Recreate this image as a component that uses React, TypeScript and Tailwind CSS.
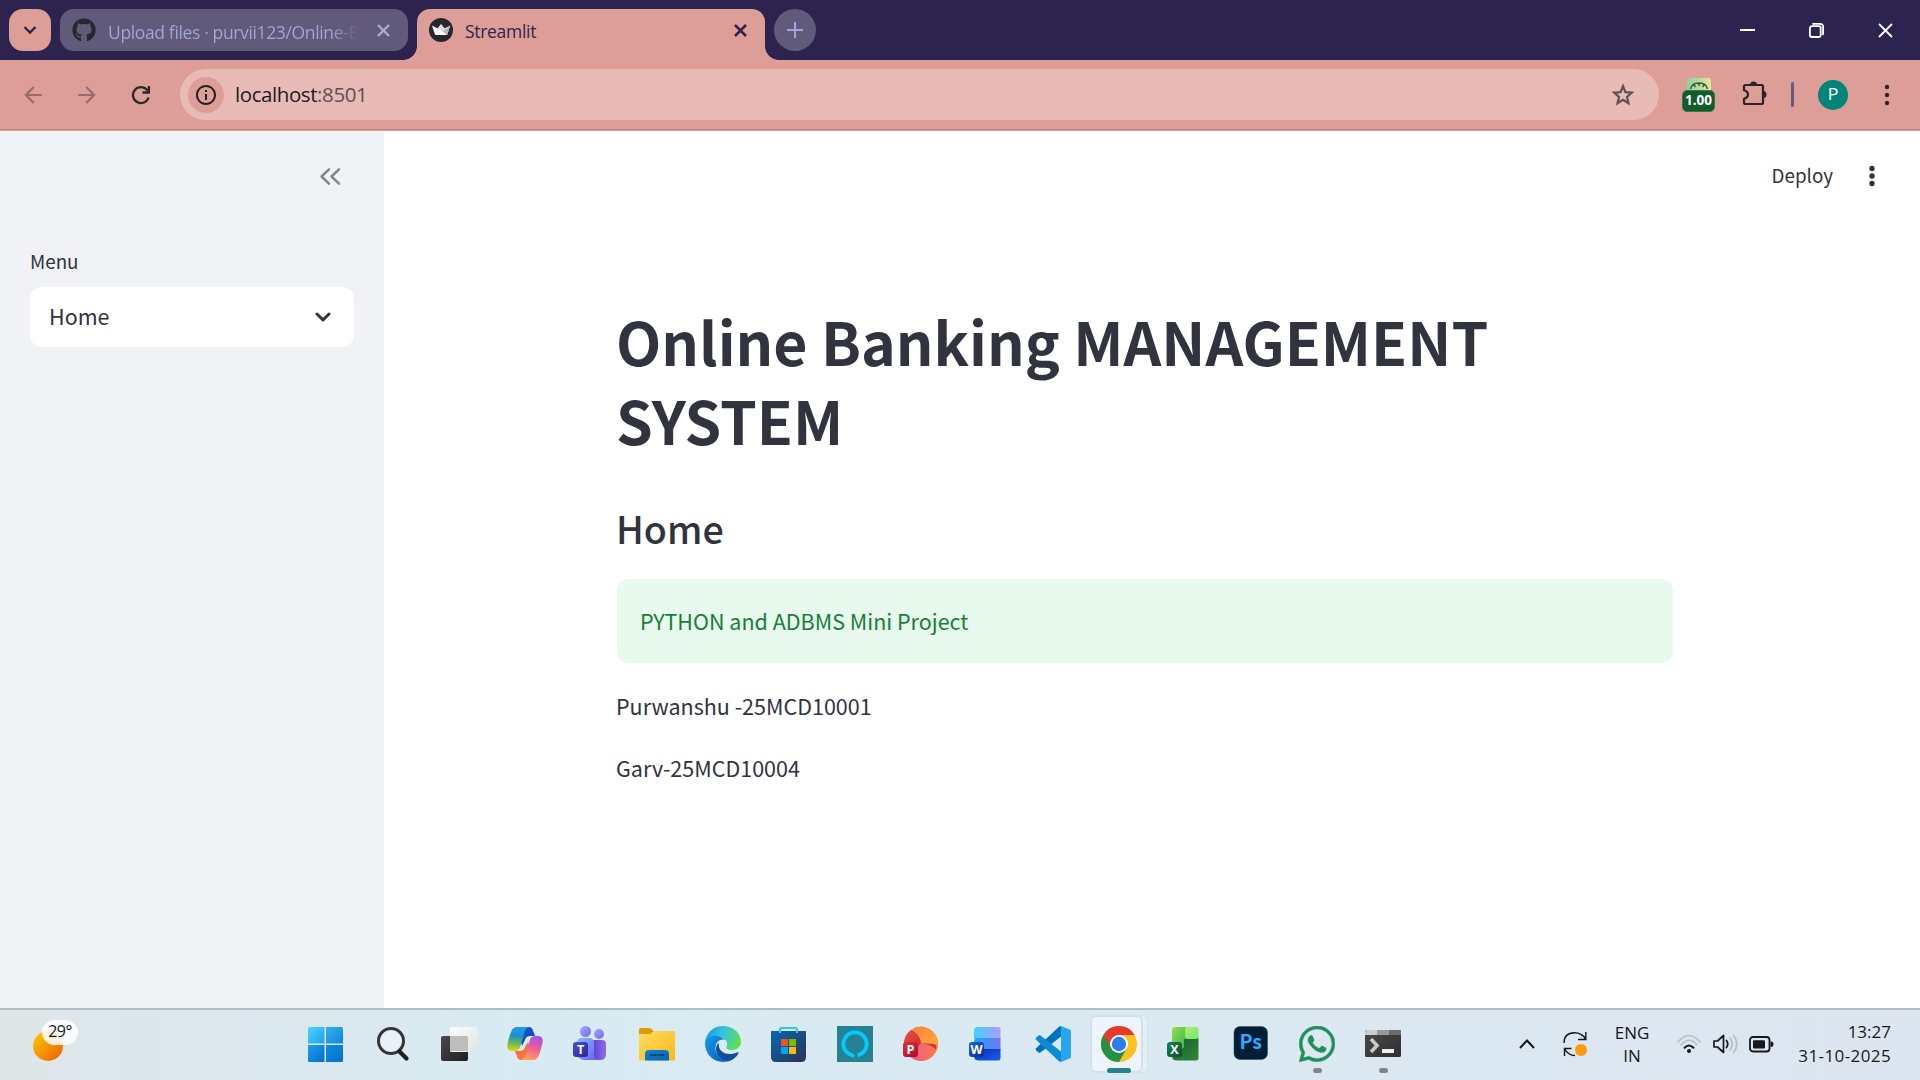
import React from 'react';
import { FaGithub } from 'react-icons/fa';
import { MdArrowBack, MdArrowForward, MdInfoOutline } from 'react-icons/md';

function Dots({ className, r = 2.2, gap = 8 }: { className: string; r?: number; gap?: number }) {
  return (
    <svg width="8" height="24" viewBox="0 0 8 24" className={className} fill="currentColor">
      <circle cx="4" cy={12 - gap} r={r} />
      <circle cx="4" cy="12" r={r} />
      <circle cx="4" cy={12 + gap} r={r} />
    </svg>
  );
}

function Cross({ size, width, className }: { size: number; width: number; className: string }) {
  return (
    <svg width={size} height={size} viewBox={`0 0 ${size} ${size}`} className={className} fill="none" stroke="currentColor" strokeWidth={width}>
      <path d={`M1 1L${size - 1} ${size - 1}M${size - 1} 1L1 ${size - 1}`} />
    </svg>
  );
}

function StreamlitCrown() {
  return (
    <svg width="24" height="24" viewBox="0 0 24 24">
      <circle cx="12" cy="12" r="12" fill="#262730" />
      <path d="M3 7.6 8.6 10.6 12 6.2 15.6 10.6 21.2 7.6 18.4 16.2Q18.2 17 17.4 17H7Q6.2 17 5.9 16.2Z" fill="#fff" />
      <path d="M12 6.2 15.6 10.6 17.8 17 8.6 10.6Z" fill="#e2e2e5" />
      <path d="M21.2 7.6 18.4 16.2 17.8 17 14 13Z" fill="#b4b4b8" />
    </svg>
  );
}

function TabStrip() {
  return (
    <header className="flex h-[60px] shrink-0 items-start bg-[#2c244e] pl-[9px] font-['Open_Sans',sans-serif]">
      <button className="mt-[9px] flex h-[42px] w-[42px] items-center justify-center rounded-[14px] bg-[#dd9e98] text-[#2c244e]">
        <svg width="14" height="10" viewBox="0 0 14 10" fill="none" stroke="currentColor" strokeWidth="2.3">
          <path d="M1.5 2 7 7.5 12.5 2" />
        </svg>
      </button>
      <div className="ml-[9px] mt-[9px] flex h-[42px] w-[348px] items-center rounded-[14px] bg-[#615a7a] pl-[12px] pr-[18px]">
        <FaGithub className="h-6 w-6 shrink-0 text-[#24292f]" />
        <div className="ml-[12px] mt-[4px] w-[253px] whitespace-nowrap bg-linear-to-r from-[#a3a6d8] from-88% to-transparent to-99% bg-clip-text text-[17.5px] leading-[32px] tracking-[-0.36px] text-transparent">
          Upload files · purvii123/Online-B
        </div>
        <Cross size={13} width={2.4} className="ml-auto text-[#a9adde]" />
      </div>
      <div className="ml-[-5px] flex h-[60px] w-[376px] items-end">
        <div className="h-[14px] w-[14px] shrink-0 bg-[radial-gradient(circle_at_0_0,transparent_13.5px,#dd9e98_14.3px)]" />
        <div className="flex h-[51px] w-[348px] shrink-0 items-start rounded-t-[13px] bg-[#dd9e98] pl-[12px] pr-[18px] pt-[9px]">
          <StreamlitCrown />
          <span className="ml-[12px] text-[17.5px] leading-[26px] tracking-[-0.3px] text-[#2c244e]">Streamlit</span>
          <Cross size={13} width={2.5} className="ml-auto mt-[6px] text-[#2c244e]" />
        </div>
        <div className="h-[14px] w-[14px] shrink-0 bg-[radial-gradient(circle_at_100%_0,transparent_13.5px,#dd9e98_14.3px)]" />
      </div>
      <button className="ml-[-5px] mt-[9px] flex h-[42px] w-[42px] items-center justify-center rounded-full bg-[#615a7a] text-[#a3a6dd]">
        <svg width="16" height="16" viewBox="0 0 16 16" fill="none" stroke="currentColor" strokeWidth="2">
          <path d="M8 0V16M0 8H16" />
        </svg>
      </button>
      <div className="ml-auto mr-[27px] flex h-[60px] items-center gap-[54px] text-white">
        <svg width="15" height="15" viewBox="0 0 15 15" fill="currentColor"><rect y="6" width="15" height="2" /></svg>
        <svg width="15" height="15" viewBox="0 0 15 15" fill="none" stroke="currentColor" strokeWidth="1.8">
          <rect x=".9" y="3.2" width="10.8" height="10.8" rx="2" />
          <path d="M3.4 1.1Q3.8.9 5 .9H11Q14.1.9 14.1 4V10Q14.1 11 13.7 12" />
        </svg>
        <Cross size={15} width={1.8} className="text-white" />
      </div>
    </header>
  );
}

function Toolbar() {
  return (
    <div className="flex h-[71px] shrink-0 flex-col bg-[#dd9e98] font-['Open_Sans',sans-serif]">
      <div className="flex h-[70px] items-center border-b border-[#b98480] pl-[21px]">
        <MdArrowBack className="h-[26px] w-[26px] -translate-x-px text-[#966c6b]" />
        <MdArrowForward className="ml-[28px] h-[26px] w-[26px] -translate-x-px text-[#966c6b]" />
        <svg width="20" height="20" viewBox="0 0 20 20" className="ml-[30px] text-[#27292b]" fill="none" stroke="currentColor" strokeWidth="2.3">
          <path d="M17.6 12.5A8 8 0 1 1 16.2 5L17.8 7" />
          <path d="M17.9 1V7.5H11.5" />
        </svg>
        <div className="ml-[29px] flex h-[51px] w-[1479px] items-center rounded-full bg-[#e8bbb7] pl-[8px] pr-[24px]">
          <div className="flex h-[36px] w-[36px] items-center justify-center rounded-full bg-[#dd9e98]">
            <MdInfoOutline className="h-[24px] w-[24px] text-[#202124]" />
          </div>
          <span className="ml-[11px] text-[20.5px] tracking-[-0.42px] text-[#5f4f52]"><span className="text-[#1d1c20]">localhost</span>:8501</span>
          <svg width="24" height="24" viewBox="0 0 24 24" className="ml-auto" fill="none" stroke="#5c5053" strokeWidth="2.2">
            <path d="M12 3.2 14.4 9.100 20.800 9.700 16 13.900 17.400 20.100 12 16.800 6.600 20.100 8 13.900 3.200 9.700 9.600 9.100Z" />
          </svg>
        </div>
        <div className="ml-[23px] flex w-[33px] flex-col items-center">
          <svg width="24" height="12" viewBox="0 0 24 12">
            <defs><linearGradient id="speed" x1="0" x2="1"><stop stopColor="#8fd09a" /><stop offset="1" stopColor="#e9e59a" /></linearGradient></defs>
            <path d="M0 12V3Q0 0 3 0H21Q24 0 24 3V12Z" fill="url(#speed)" />
            <path d="M3.5 11Q5 5 12 5T20.5 11M12 5V8M7 7 8.5 9M17 7 15.5 9" fill="none" stroke="#2f5446" strokeWidth="1.3" />
          </svg>
          <span className="flex h-[22px] w-[33px] items-center justify-center rounded-[5px] border border-[#3c7747] bg-[#115c2a] text-[13.5px] font-bold leading-none text-white">1.00</span>
        </div>
        <svg width="27" height="27" viewBox="0 0 27 27" className="ml-[26px] -translate-y-px">
          <path d="M3 6.5Q3 5 4.5 5H20.5Q22 5 22 6.5V22.5Q22 24 20.5 24H4.5Q3 24 3 22.5V18.7Q7 17.5 7 14.5T3 10.3Z" fill="none" stroke="#2b2426" strokeWidth="2.2" strokeLinejoin="round" />
          <path d="M9 5A3.5 3.5 0 0 1 16 5ZM22 11A3.5 3.5 0 0 1 22 18Z" fill="#2b2426" />
        </svg>
        <div className="ml-[23px] h-[25px] w-[3px] rounded-full bg-[#675a7f]" />
        <div className="ml-[24px] flex h-[30px] w-[30px] items-center justify-center rounded-full bg-[#008577] font-['Roboto',sans-serif] text-[16px] text-white">P</div>
        <Dots className="ml-[35px] text-[#2b2426]" />
      </div>
    </div>
  );
}

function Sidebar() {
  return (
    <aside className="flex w-[384px] shrink-0 flex-col bg-[#f0f2f6] px-[30px]">
      <div className="flex h-[90px] items-center justify-end">
        <svg width="22" height="19" viewBox="0 0 22 19" className="mr-[13px] text-[#82848f]" fill="none" stroke="currentColor" strokeWidth="2.5" strokeLinecap="round" strokeLinejoin="round">
          <path d="M10 2.3 2.5 9.5 10 16.7M20 2.3 12.5 9.5 20 16.7" />
        </svg>
      </div>
      <label className="mt-[25px] text-[18.8px] leading-[30px]">Menu</label>
      <div className="mt-[11px] flex h-[60px] items-center rounded-[12px] bg-white pl-[19px] pr-[23px] text-[21.5px]">
        <span className="-mt-[2px]">Home</span>
        <svg width="16" height="11" viewBox="0 0 16 11" className="ml-auto" fill="none" stroke="currentColor" strokeWidth="3" strokeLinecap="round" strokeLinejoin="round">
          <path d="M2 2 8 7.8 14 2" />
        </svg>
      </div>
    </aside>
  );
}

function Main() {
  return (
    <main className="flex flex-1 flex-col bg-white">
      <div className="flex h-[90px] shrink-0 items-center justify-end pr-[44px]">
        <span className="-mt-[2px] text-[18.8px]">Deploy</span>
        <Dots className="ml-[35px]" r={2.7} gap={7.5} />
      </div>
      <div className="ml-[233px] w-[1056px] pt-[80px]">
        <h1 className="-ml-px text-[58.9px] font-bold leading-[79px]">Online Banking MANAGEMENT<br />SYSTEM</h1>
        <h3 className="-ml-px mt-[44px] text-[37.6px] font-medium leading-[50px]">Home</h3>
        <div className="mt-[26px] flex h-[84px] items-center rounded-[12px] bg-[#e8f9ee] px-[23px] text-[21.5px] text-[#177f38]">PYTHON and ADBMS Mini Project</div>
        <p className="-ml-px mt-[24px] text-[21.5px] leading-[38px]">Purwanshu -25MCD10001</p>
        <p className="-ml-px mt-[24px] text-[21.5px] leading-[38px]">Garv-25MCD10004</p>
      </div>
    </main>
  );
}

const icon = { width: 36, height: 36, viewBox: '0 0 36 36' };

function Gradient({ id, from, to, horizontal }: { id: string; from: string; to: string; horizontal?: boolean }) {
  return (
    <linearGradient id={id} x1="0" y1="0" x2="1" y2={horizontal ? '0' : '1'}>
      <stop stopColor={from} /><stop offset="1" stopColor={to} />
    </linearGradient>
  );
}

function Start() {
  return (
    <svg {...icon}>
      <defs>
        <Gradient id="w1" from="#4ed3ff" to="#1fa0ec" /><Gradient id="w2" from="#31b1ef" to="#0f86dd" />
        <Gradient id="w3" from="#1f9ee9" to="#0070d0" /><Gradient id="w4" from="#0f8ae0" to="#0072d2" />
      </defs>
      <path d="M0 2.5Q0 1 1.5 1H16.5V17.5H0Z" fill="url(#w1)" /><path d="M18 1H33.5Q35 1 35 2.5V17.5H18Z" fill="url(#w2)" />
      <path d="M0 19H16.5V36H1.5Q0 36 0 34.5Z" fill="url(#w3)" /><path d="M18 19H35V34.5Q35 36 33.5 36H18Z" fill="url(#w4)" />
    </svg>
  );
}

function SearchIcon() {
  return (
    <svg {...icon}>
      <circle cx="16" cy="15" r="12.5" fill="#e9f1f7" stroke="#363636" strokeWidth="3" />
      <path d="M24.5 25.5 31.5 32.5" stroke="#1f1f1f" strokeWidth="4.2" strokeLinecap="round" />
    </svg>
  );
}

function TaskView() {
  return (
    <svg {...icon}>
      <defs><Gradient id="tv1" from="#4b4b4b" to="#1e1e1e" /><Gradient id="tv2" from="#fdfdfd" to="#e2e3e5" /></defs>
      <rect y="10" width="27" height="25" rx="2" fill="url(#tv1)" />
      <rect x="9" y="1" width="27" height="25" rx="1.5" fill="url(#tv2)" />
      <path d="M9 10H25Q27 10 27 12V25H9Z" fill="#bdbdbd" />
    </svg>
  );
}

function Copilot() {
  return (
    <svg {...icon}>
      <defs>
        <linearGradient id="cp1" x1=".4" y1="0" x2=".3" y2="1"><stop stopColor="#1d9be8" /><stop offset=".35" stopColor="#1c8fd6" /><stop offset=".65" stopColor="#5cb85a" /><stop offset="1" stopColor="#f0cf12" /></linearGradient>
        <linearGradient id="cp2" x1=".7" y1="0" x2=".4" y2="1"><stop stopColor="#a450f0" /><stop offset=".5" stopColor="#ee5f92" /><stop offset="1" stopColor="#fda05c" /></linearGradient>
        <Gradient id="cp3" from="#1c5fdc" to="#0a3fae" /><Gradient id="cp4" from="#f4602c" to="#f7874a" />
      </defs>
      <path d="M10 1H22Q25 1 26 4.5L28 10H23Q19 10 18 14L15 20Z" fill="url(#cp3)" />
      <path d="M26 34H14Q11 34 10 30.5L8 25H13Q17 25 18 21L21 16Z" fill="url(#cp4)" />
      <path d="M10 1H22Q19 1.5 17.5 6L13.5 20Q12 25 7.5 25H4.5Q0 25 .3 19Q1.5 12 4.5 5Q6 1 10 1Z" fill="url(#cp1)" />
      <path d="M26 34H14Q17 33.5 18.5 29L22.5 15Q24 10 28.5 10H31.5Q36 10 35.7 16Q34.5 23 31.5 30Q30 34 26 34Z" fill="url(#cp2)" />
    </svg>
  );
}

function LetterBadge({ letter, fill }: { letter: string; fill: string }) {
  return (
    <>
      <rect y="16" width="15" height="15" rx="3" fill={fill} />
      <text x="7.5" y="27.8" textAnchor="middle" fontSize="12.5" fontWeight="700" fill="#fff" fontFamily="Open Sans, sans-serif">{letter}</text>
    </>
  );
}

function Teams() {
  return (
    <svg {...icon}>
      <defs><Gradient id="t1" from="#a7a6ff" to="#6f6be8" /><Gradient id="t2" from="#5341c8" to="#8f6cf2" horizontal /><Gradient id="t3" from="#82bdff" to="#6a5af0" /><Gradient id="t4" from="#4650d0" to="#2e22a0" /></defs>
      <circle cx="26" cy="8" r="5" fill="url(#t1)" />
      <path d="M18 14H29Q33 14 33 18V28Q33 34 27 34H18Z" fill="url(#t2)" />
      <circle cx="12.5" cy="5.5" r="5.5" fill="url(#t1)" />
      <path d="M4 17Q4 12 9 12H16Q21 12 21 17V29Q21 34 26 34H12Q4 34 4 26Z" fill="url(#t3)" />
      <LetterBadge letter="T" fill="url(#t4)" />
    </svg>
  );
}

function Folder() {
  return (
    <svg {...icon}>
      <defs><Gradient id="f1" from="#ffdb63" to="#fcb917" /><Gradient id="f2" from="#1182cf" to="#0b62ae" /></defs>
      <path d="M0 3.5Q0 2 1.5 2H10Q11.5 2 13 3.5L15 5.5V12H0Z" fill="#dd9a04" />
      <path d="M0 8H10Q11.5 8 13 6.5L14 5.5Q14.5 5 16 5H34.5Q36 5 36 6.5V33Q36 34.5 34.5 34.5H1.5Q0 34.5 0 33Z" fill="url(#f1)" />
      <path d="M6 34.5V28Q6 24 10 24H26Q30 24 30 28V34.5Z" fill="url(#f2)" />
      <rect x="10.5" y="28" width="15" height="2" rx="1" fill="#084b89" />
    </svg>
  );
}

function Edge() {
  return (
    <svg {...icon}>
      <defs>
        <linearGradient id="e1" x1="0" y1=".3" x2="1" y2=".6"><stop stopColor="#1b9de2" /><stop offset=".45" stopColor="#34c3e0" /><stop offset="1" stopColor="#63e04b" /></linearGradient>
        <Gradient id="e2" from="#1599e5" to="#0560c0" />
      </defs>
      <path d="M0 17C1 6 9 0 18 0C28 0 36 7 36 15.5C36 21 32 24 27 24C23 24 20.5 22.5 21.5 20.5C23 18.5 22.5 14 18.5 13.5C12 8 3 10 0 17Z" fill="url(#e1)" />
      <path d="M0 17C2 8.5 13 7.5 19 13.5C14 13 10 17 10.5 23C11 29 16 34.5 22 35.5C10 38 0 29 0 17Z" fill="url(#e2)" />
      <path d="M14 17C12.5 24 19 28.5 25.5 28C29 27.7 31.5 26.5 33 26.2Q34 26 33.5 27.2C31 32 26.5 35 22 35.5C15.5 34.5 11 29 11 23C11 20 12 18 14 17Z" fill="#104f9c" />
    </svg>
  );
}

function Store() {
  return (
    <svg {...icon}>
      <defs><Gradient id="s1" from="#0768b4" to="#2a3158" /></defs>
      <path d="M0 5H35V31Q35 36 30 36H5Q0 36 0 31Z" fill="url(#s1)" />
      <path d="M9 7V3.500Q9 2 10.5 2H24.5Q26 2 26 3.5V7" fill="none" stroke="#37c2f3" strokeWidth="2" />
      <path d="M10 13H17V20H10Z" fill="#f25022" /><path d="M18 13H25V20H18Z" fill="#7fba00" />
      <path d="M10 21H17V28H10Z" fill="#00a4ef" /><path d="M18 21H25V28H18Z" fill="#ffb900" />
    </svg>
  );
}

function Alexa() {
  return (
    <svg {...icon}>
      <rect width="36" height="36" fill="#268293" />
      <path d="M15.5 29.3A11.6 11.6 0 1 1 20.5 29.3" fill="none" stroke="#03caff" strokeWidth="3.8" />
      <path d="M14.5 27.5 17 28.2Q18 30 17.3 31.5Q15.8 31.2 14.5 30.8Z" fill="#03caff" />
    </svg>
  );
}

function PowerPoint() {
  return (
    <svg {...icon}>
      <defs><Gradient id="p1" from="#e8503e" to="#c22a33" /><Gradient id="p2" from="#f9813e" to="#ffa736" /><Gradient id="p3" from="#e64fa0" to="#ff7d45" horizontal /><Gradient id="p4" from="#e02c45" to="#a70e26" /></defs>
      <circle cx="18" cy="18" r="17" fill="url(#p3)" />
      <path d="M8 4A17 17 0 0 1 35 18Q34 19.5 31 18.5L18 17Q17 9 8 4Z" fill="url(#p2)" />
      <path d="M18 17 31 18Q34 18.5 33 23.5Q27 18 18 17Z" fill="#c83a37" />
      <path d="M1 18A17 17 0 0 1 8 4Q17 8 18 17Q14 21 13 27L6 30Q1 25 1 18Z" fill="url(#p1)" />
      <LetterBadge letter="P" fill="url(#p4)" />
    </svg>
  );
}

function Word() {
  return (
    <svg {...icon}>
      <defs><Gradient id="d1" from="#3fd0ff" to="#b29bf5" horizontal /><Gradient id="d2" from="#1aa5f2" to="#7278ee" horizontal /><Gradient id="d3" from="#0b2fae" to="#1560f5" /><Gradient id="d4" from="#1964c8" to="#0c2d96" /></defs>
      <path d="M5 5Q5 1 9 1H29Q31.5 1 31.5 3.5V13H5Z" fill="url(#d1)" />
      <path d="M5 16Q5 12 9 12H31.5V24H5Z" fill="url(#d2)" />
      <path d="M5 27Q5 23 9 23H31.5V32Q31.5 34.5 29 34.5H10Q5 34.5 5 30Z" fill="url(#d3)" />
      <LetterBadge letter="W" fill="url(#d4)" />
    </svg>
  );
}

function VsCode() {
  return (
    <svg {...icon}>
      <path d="M26 0 34.5 3.5Q36 4 36 5.5V30.5Q36 32 34.5 32.5L26 36Z" fill="#27a5f1" />
      <path d="M26 0V10.5L5.5 26.5Q4.5 27.3 3.5 26.5L1 24.3Q0 23.2 1 22.3L24 .8Q25 0 26 0Z" fill="#0074ba" />
      <path d="M26 36V25.5L5.5 9.5Q4.5 8.7 3.5 9.5L1 11.7Q0 12.8 1 13.7L24 35.2Q25 36 26 36Z" fill="#0a8bd6" />
    </svg>
  );
}

function Chrome() {
  return (
    <svg {...icon}>
      <circle cx="18" cy="18" r="18" fill="#fcc31e" />
      <path d="M18 18 2.4 9A18 18 0 0 0 18 36L25.8 22.5Z" fill="#229342" />
      <path d="M33.6 9A18 18 0 0 0 2.4 9L10.2 22.5 18 9Z" fill="#e33b2e" />
      <circle cx="18" cy="18" r="9" fill="#fff" /><circle cx="18" cy="18" r="7.2" fill="#2b7de9" />
    </svg>
  );
}

function Excel() {
  return (
    <svg {...icon}>
      <defs><Gradient id="x1" from="#b0ee6f" to="#6fe868" /><Gradient id="x2" from="#8fe04f" to="#3fae55" /><Gradient id="x3" from="#165c30" to="#2f8a33" /><Gradient id="x4" from="#178553" to="#0b4f33" /></defs>
      <path d="M5 12H31.5V32Q31.5 34.5 29 34.5H10Q5 34.5 5 30Z" fill="url(#x3)" />
      <path d="M5 5Q5 1 9 1H20V12Q17 12 17 15V20Q17 23 14 23H5Z" fill="url(#x2)" />
      <rect x="18" y="1" width="13.5" height="12" rx="2.5" fill="url(#x1)" />
      <LetterBadge letter="X" fill="url(#x4)" />
    </svg>
  );
}

function Photoshop() {
  return (
    <svg {...icon}>
      <rect x="1" y=".5" width="33.5" height="33" rx="6" fill="#001e36" stroke="#3b5366" strokeWidth=".6" />
      <text x="17.8" y="23" textAnchor="middle" fontSize="19.5" fontWeight="700" fill="#31a8ff" fontFamily="Noto Sans CJK SC, sans-serif">Ps</text>
    </svg>
  );
}

function WhatsApp() {
  return (
    <svg width="36" height="36" viewBox="0 0 24 24" fill="#1f8f5b">
      <path d="M17.472 14.382c-.297-.149-1.758-.867-2.03-.967-.273-.099-.471-.148-.67.15-.197.297-.767.966-.94 1.164-.173.199-.347.223-.644.075-.297-.15-1.255-.463-2.39-1.475-.883-.788-1.48-1.761-1.653-2.059-.173-.297-.018-.458.13-.606.134-.133.298-.347.446-.52.149-.174.198-.298.298-.497.099-.198.05-.371-.025-.52-.075-.149-.669-1.612-.916-2.207-.242-.579-.487-.5-.669-.51-.173-.008-.371-.01-.57-.01-.198 0-.52.074-.792.372-.272.297-1.04 1.016-1.04 2.479 0 1.462 1.065 2.875 1.213 3.074.149.198 2.096 3.2 5.077 4.487.709.306 1.262.489 1.694.625.712.227 1.36.195 1.871.118.571-.085 1.758-.719 2.006-1.413.248-.694.248-1.289.173-1.413-.074-.124-.272-.198-.57-.347m-5.421 7.403h-.004a9.87 9.87 0 01-5.031-1.378l-.361-.214-3.741.982.998-3.648-.235-.374a9.86 9.86 0 01-1.51-5.26c.001-5.45 4.436-9.884 9.888-9.884 2.64 0 5.122 1.03 6.988 2.898a9.825 9.825 0 012.893 6.994c-.003 5.45-4.437 9.884-9.885 9.884m8.413-18.297A11.815 11.815 0 0012.05 0C5.495 0 .16 5.335.157 11.892c0 2.096.547 4.142 1.588 5.945L.057 24l6.305-1.654a11.882 11.882 0 005.683 1.448h.005c6.554 0 11.89-5.335 11.893-11.893a11.821 11.821 0 00-3.48-8.413z" stroke="#1f8f5b" strokeWidth=".3" />
    </svg>
  );
}

function Terminal() {
  return (
    <svg {...icon}>
      <defs><Gradient id="tm" from="#494949" to="#303030" /></defs>
      <rect y="4" width="36" height="27" rx="1.5" fill="url(#tm)" />
      <path d="M0 9V5.5Q0 4 1.5 4H12V9Z" fill="#cdcdcd" /><path d="M12 4H24V9H12Z" fill="#999" /><path d="M24 4H34.5Q36 4 36 5.5V9H24Z" fill="#6b6b6b" />
      <path d="M6 13 12 19.5 6 26" fill="none" stroke="#c9c9c9" strokeWidth="3.6" />
      <rect x="17" y="23" width="12" height="4" fill="#efefef" />
    </svg>
  );
}

type TaskApp = { name: string; Icon: () => React.JSX.Element; open?: boolean; active?: boolean };

const APPS: TaskApp[] = [
  { name: 'Search', Icon: SearchIcon },
  { name: 'Task view', Icon: TaskView },
  { name: 'Copilot', Icon: Copilot },
  { name: 'Teams', Icon: Teams },
  { name: 'Explorer', Icon: Folder },
  { name: 'Edge', Icon: Edge },
  { name: 'Store', Icon: Store },
  { name: 'Alexa', Icon: Alexa },
  { name: 'PowerPoint', Icon: PowerPoint },
  { name: 'Word', Icon: Word },
  { name: 'Code', Icon: VsCode },
  { name: 'Chrome', Icon: Chrome, active: true },
  { name: 'Excel', Icon: Excel },
  { name: 'Photoshop', Icon: Photoshop },
  { name: 'WhatsApp', Icon: WhatsApp, open: true },
  { name: 'Terminal', Icon: Terminal, open: true },
];

function TaskButton({ Icon, open, active }: TaskApp) {
  return (
    <div className="relative flex h-[70px] w-[66px] justify-center pt-[16px]">
      {active && <div className="absolute left-[12px] top-[5px] h-[58px] w-[50px] rounded-[6px] border border-[#d3e1e9] bg-[#e4f0f6]" />}
      {active && <div className="absolute left-[4px] top-[5px] h-[58px] w-[53px] rounded-[6px] border-2 border-[#d3e2ea] bg-[#edf4fa]" />}
      <div className="relative"><Icon /></div>
      {active && <div className="absolute left-[21px] top-[58px] h-[5px] w-[24px] rounded-full bg-[#268293]" />}
      {open && <div className="absolute left-[29px] top-[58px] h-[5px] w-[9px] rounded-full bg-[#7d868c]" />}
    </div>
  );
}

function Taskbar() {
  return (
    <footer className="flex h-[72px] shrink-0 items-center border-t-2 border-[#aebcc4] bg-linear-to-r from-[#dfe6e8] via-[#d8ebf3] via-28% to-[#dde6f0] font-['Open_Sans',sans-serif] text-[#17181a]">
      <div className="relative -mt-[9px] ml-[32px] h-[44px] w-[48px]">
        <div className="absolute left-px top-[12px] h-[30px] w-[30px] rounded-full bg-linear-to-br from-[#ffcc00] to-[#e85a05]" />
        <div className="absolute left-[10px] top-[1px] flex h-[25px] w-[36px] items-center justify-center rounded-full bg-white/85 pb-[2px] text-[16px] tracking-[-0.5px]">29°</div>
      </div>
      <div className="ml-[228px] flex h-[70px] w-[52px] items-start pt-[16px]"><Start /></div>
      <div className="flex">{APPS.map((a) => <TaskButton key={a.name} {...a} />)}</div>
      <svg width="16" height="10" viewBox="0 0 16 10" className="-mt-[2px] ml-[103px]" fill="none" stroke="currentColor" strokeWidth="2"><path d="M1 9 8 1.5 15 9" /></svg>
      <svg width="26" height="26" viewBox="0 0 26 26" className="-mt-[2px] ml-[27px]" fill="none" stroke="currentColor" strokeWidth="1.4">
        <path d="M2 12Q2 2 12.5 1.8 20 1.8 23.5 8M23.8 1V8.5H16M2.5 25V17.5H9.5M2.5 17.5Q6 24.5 13 24.5" />
        <circle cx="19" cy="19" r="6" fill="#ff9a0a" stroke="none" />
      </svg>
      <div className="-mt-[2px] ml-[23px] w-[42px] text-center text-[17px] leading-[23px]">ENG<br />IN</div>
      <svg width="24" height="20" viewBox="0 0 24 20" className="-mt-[2px] ml-[24px]" fill="none" strokeWidth="1.6" strokeLinecap="round">
        <path d="M1 8Q12-5 23 8" stroke="#b3c1c8" /><path d="M4 11Q12 1.5 20 11" stroke="#b3c1c8" />
        <path d="M7.5 13.8Q12 9 16.5 13.8" stroke="currentColor" strokeWidth="2" /><circle cx="12" cy="17" r="2" fill="currentColor" />
      </svg>
      <svg width="25" height="20" viewBox="0 0 25 20" className="-mt-[2px] ml-[12px]" fill="none" strokeWidth="1.7" strokeLinecap="round" strokeLinejoin="round">
        <path d="M1 7H4.5L10.5 1.5V18.5L4.5 13H1Z" stroke="currentColor" /><path d="M13.5 6.5Q16 10 13.5 13.5" stroke="currentColor" />
        <path d="M17 4Q21.5 10 17 16M20.5 1.5Q27 10 20.5 18.5" stroke="#b3c1c8" />
      </svg>
      <svg width="25" height="17" viewBox="0 0 25 17" className="-mt-[2px] ml-[11px]" fill="none">
        <rect x="1" y="1" width="19.5" height="14.5" rx="3" stroke="currentColor" strokeWidth="1.8" /><rect x="4" y="4.2" width="12" height="8.2" rx="1" fill="currentColor" /><path d="M21.5 5.5H22.5Q24.5 5.5 24.5 8.2T22.5 11H21.5Z" fill="currentColor" />
      </svg>
      <div className="-mt-[3px] ml-auto mr-[29px] text-right text-[17px] leading-[24px]">13:27<br /><span className="tracking-[0.4px]">31-10-2025</span></div>
    </footer>
  );
}

export default function App() {
  return (
    <div className="flex h-[1080px] w-[1920px] flex-col overflow-hidden bg-white">
      <TabStrip />
      <Toolbar />
      <div className="flex min-h-0 flex-1 font-['Noto_Sans_CJK_SC',sans-serif] text-[#31333f]">
        <Sidebar />
        <Main />
      </div>
      <Taskbar />
    </div>
  );
}
